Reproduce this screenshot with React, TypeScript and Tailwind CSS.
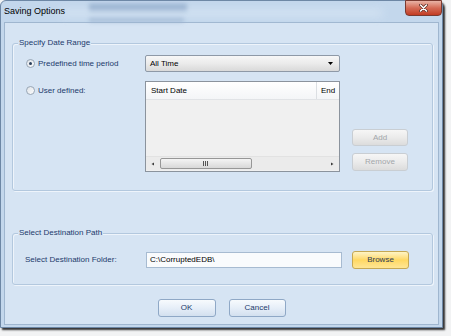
import React from "react";

const Radio = ({ checked }: { checked?: boolean }) => (
  <span className="w-[9px] h-[9px] rounded-full border border-[#98a6b5] bg-gradient-to-br from-[#dfe3e8] to-[#fbfcfd] flex items-center justify-center shrink-0">
    {checked && <span className="w-[3px] h-[3px] rounded-full bg-[#2a3f5c]" />}
  </span>
);

const GroupBox = ({
  title,
  className,
  children,
}: {
  title: string;
  className: string;
  children: React.ReactNode;
}) => (
  <div
    className={`relative w-[421px] ml-[7px] rounded-[3px] border border-[#b3c8de] shadow-[inset_1px_1px_0_#eef4fb,1px_1px_0_#eef4fb] ${className}`}
  >
    <span className="absolute -top-[6px] left-[5px] px-[1px] bg-[#d6e4f3] text-[#1c3a6b] leading-[10px]">
      {title}
    </span>
    {children}
  </div>
);

const DlgButton = ({
  label,
  className,
}: {
  label: string;
  className: string;
}) => (
  <div
    className={`flex items-center justify-center rounded-[3px] border ${className}`}
  >
    {label}
  </div>
);

const App = () => {
  return (
    <div className="w-[451px] h-[336px] bg-[#f2f3f4] font-['Liberation_Sans',Arial,sans-serif] text-[8px] overflow-hidden">
      <div className="w-[443px] h-[328px] flex flex-col bg-[#c3d7ec] rounded-t-[6px] border border-[#6d87a5] shadow-[2px_2px_2px_rgba(0,0,0,0.8)]">
        {/* title bar */}
        <div className="relative h-[21px] flex items-start justify-between">
          <div className="absolute left-[88px] top-[3px] w-[98px] h-[8px] bg-[#7f9cc0] blur-[2px] opacity-70" />
          <div className="absolute left-[88px] top-[16px] w-[95px] h-[5px] bg-[#94aecd] blur-[2px] opacity-70" />
          <div className="absolute left-[60px] right-[60px] top-[9px] h-[6px] bg-[#dce9f6] blur-[4px] opacity-80" />
          <span className="relative mt-[4px] ml-[3px] text-[9px] text-black leading-[12px]">
            Saving Options
          </span>
          <div className="relative -mt-[1px] mr-[0px] w-[37px] h-[16px] rounded-b-[4px] border border-[#7a3a30] bg-gradient-to-b from-[#e8b3a6] via-[#d46a55] to-[#c23b22] flex items-center justify-center">
            <svg width="9" height="8" viewBox="0 0 9 8">
              <path
                d="M1.5 1 L7.5 7 M7.5 1 L1.5 7"
                stroke="#5a2a22"
                strokeWidth="3"
                strokeLinecap="round"
              />
              <path
                d="M1.5 1 L7.5 7 M7.5 1 L1.5 7"
                stroke="#ffffff"
                strokeWidth="1.6"
                strokeLinecap="round"
              />
            </svg>
          </div>
        </div>

        {/* client area */}
        <div className="mx-[3px] mb-[2px] flex-1 bg-[#d6e4f3] border border-[#9fb6cf] flex flex-col">
          <GroupBox title="Specify Date Range" className="mt-[20px] h-[148px] pt-[11px] pl-[13px]">
            <div className="flex">
              <div className="flex flex-col">
                <div className="h-[17px] flex items-center gap-0">
                  <div className="w-[119px] flex items-center">
                    <Radio checked />
                    <span className="ml-[3px] text-[#1c3a6b]">Predefined time period</span>
                  </div>
                  <div className="w-[195px] h-[17px] rounded-[2px] border border-[#8e99a7] bg-gradient-to-b from-[#f7f7f7] via-[#ebebeb] to-[#d9d9d9] flex items-center justify-between pl-[4px] pr-[6px] text-black">
                    <span>All Time</span>
                    <svg width="5" height="3" viewBox="0 0 5 3">
                      <path d="M0 0 H5 L2.5 3 Z" fill="#000" />
                    </svg>
                  </div>
                </div>
                <div className="mt-[9px] flex">
                  <div className="w-[119px] h-[19px] flex items-center">
                    <Radio />
                    <span className="ml-[3px] text-[#1c3a6b]">User defined:</span>
                  </div>
                  <div className="w-[195px] h-[91px] border border-[#8b939d] bg-[#f0f0f0] flex flex-col">
                    <div className="h-[18px] flex bg-gradient-to-b from-white to-[#f4f5f7] border-b border-[#e1e3e6] text-black">
                      <div className="w-[171px] border-r border-[#dcdfe3] flex items-center pl-[5px]">
                        Start Date
                      </div>
                      <div className="flex-1 flex items-center pl-[4px] overflow-hidden">End</div>
                    </div>
                    <div className="flex-1" />
                    <div className="h-[14px] mb-[1px] flex items-center bg-[#ebebeb] border-t border-[#e2e2e2]">
                      <svg width="14" height="14" viewBox="0 0 14 14" className="shrink-0">
                        <path d="M8 5.5 L5.5 7 L8 8.5 Z" fill="#3c3c3c" />
                      </svg>
                      <div className="w-[92px] h-[11px] rounded-[2px] border border-[#979797] bg-gradient-to-b from-[#f4f4f4] to-[#d8d8d8] flex items-center justify-center">
                        <svg width="6" height="5" viewBox="0 0 6 5">
                          <path d="M0.5 0 V5 M2.5 0 V5 M4.5 0 V5" stroke="#555" strokeWidth="1" />
                        </svg>
                      </div>
                      <div className="flex-1" />
                      <svg width="14" height="14" viewBox="0 0 14 14" className="shrink-0">
                        <path d="M6 5.5 L8.5 7 L6 8.5 Z" fill="#3c3c3c" />
                      </svg>
                    </div>
                  </div>
                </div>
              </div>
              <div className="ml-[12px] flex flex-col justify-end gap-[7px] pb-[1px]">
                <DlgButton
                  label="Add"
                  className="w-[56px] h-[17px] border-[#c9ced3] bg-gradient-to-b from-[#f6f6f6] via-[#ebebeb] to-[#dcdcdc] text-[#a2a6aa]"
                />
                <DlgButton
                  label="Remove"
                  className="w-[56px] h-[18px] border-[#c9ced3] bg-gradient-to-b from-[#f6f6f6] via-[#ebebeb] to-[#dcdcdc] text-[#a2a6aa]"
                />
              </div>
            </div>
          </GroupBox>

          <GroupBox title="Select Destination Path" className="mt-[42px] h-[52px] pt-[17px] pl-[12px]">
            <div className="flex items-center">
              <span className="w-[121px] text-[#1c3a6b]">Select Destination Folder:</span>
              <div className="w-[196px] h-[16px] border border-[#a7bbd1] bg-[#f9fbfd] flex items-center pl-[3px] text-black">
                C:\CorruptedEDB\
              </div>
              <DlgButton
                label="Browse"
                className="ml-[10px] w-[57px] h-[18px] border-[#c6a853] bg-gradient-to-b from-[#fff4c4] via-[#ffd862] to-[#ffe694] text-[#2d3b55]"
              />
            </div>
          </GroupBox>

          <div className="mt-[14px] flex justify-center gap-[13px]">
            <DlgButton
              label="OK"
              className="w-[58px] h-[18px] border-[#8fa8c6] bg-gradient-to-b from-[#f7fafd] via-[#e6eef8] to-[#d3e0ef] text-[#1c3a6b]"
            />
            <DlgButton
              label="Cancel"
              className="w-[57px] h-[18px] border-[#8fa8c6] bg-gradient-to-b from-[#f7fafd] via-[#e6eef8] to-[#d3e0ef] text-[#1c3a6b]"
            />
          </div>
        </div>
      </div>
    </div>
  );
};

export default App;
